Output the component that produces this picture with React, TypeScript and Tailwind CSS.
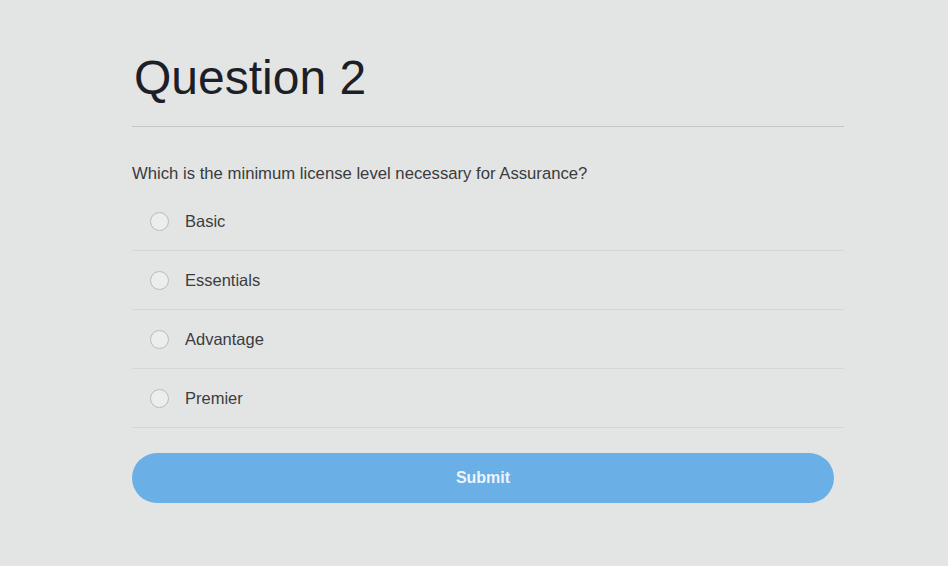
const options = ['Basic', 'Essentials', 'Advantage', 'Premier']

export default function App() {
  return (
    <main className="min-h-[566px] w-full bg-[#e3e5e4] font-['Liberation_Sans',Arial,sans-serif]">
      <section className="ml-[132px] w-[712px] pt-[50px]">
        <h1 className="pl-[2px] text-[48px] leading-[56px] text-[#1c1e28]">Question 2</h1>
        <div className="mt-[20px] h-px bg-[#c4c7c6]" />

        <p className="mt-[37px] text-[16.7px] leading-[20px] text-[#3a3b3e]">
          Which is the minimum license level necessary for Assurance?
        </p>

        <div className="mt-[8px]">
          {options.map((label) => (
            <label
              key={label}
              className="flex h-[59px] items-center gap-[16px] border-b border-[#d4d7d6] pl-[18px]"
            >
              <span className="h-[19px] w-[19px] rounded-full border border-[#b9bcbb] bg-[#eceeed]" />
              <span className="text-[16.5px] text-[#3b3c3f]">{label}</span>
            </label>
          ))}
        </div>

        <button className="mt-[25px] h-[50px] w-[702px] rounded-full bg-[#6aafe5] text-[16px] font-bold text-[#eef4fa]">
          Submit
        </button>
      </section>
    </main>
  )
}
